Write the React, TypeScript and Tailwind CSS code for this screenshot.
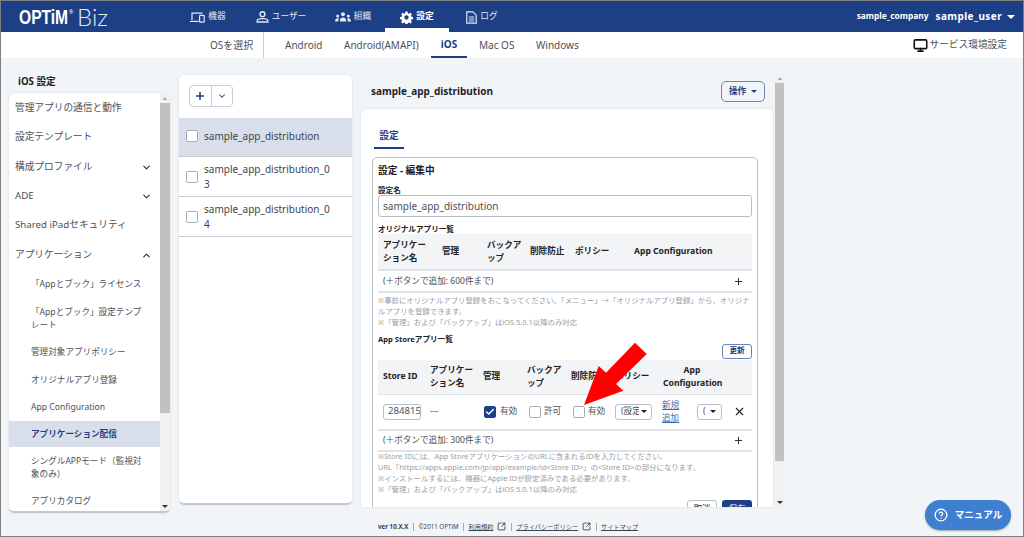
import React from "react";
import { Monitor, ChevronDown, ChevronUp, Plus, X, Check, CircleHelp, SquareArrowOutUpRight } from "lucide-react";

const Box = ({ on = false, className = "" }: { on?: boolean; className?: string }) => (
  <span className={`flex h-[12px] w-[12px] shrink-0 items-center justify-center rounded-[2px] border ${on ? "border-[#1d3f85] bg-[#1d3f85]" : "border-[#a9aeb5] bg-white"} ${className}`}>
    {on && <Check size={10} strokeWidth={3.5} className="text-white" />}
  </span>
);

const Caret = ({ className = "" }: { className?: string }) => (
  <span className={`inline-block h-0 w-0 border-x-[3px] border-t-[3px] border-x-transparent ${className}`} />
);

const Nav = ({ icon, label, active = false, w }: { icon: React.ReactNode; label: string; active?: boolean; w: string }) => (
  <div className={`flex h-[27px] items-center justify-center gap-[3px] pt-[5px] text-[8.7px] ${w} ${active ? "font-bold text-white" : "text-[#e4e9f2]"}`}>
    {icon}
    <span>{label}</span>
  </div>
);

const DeviceIcon = () => (
  <svg width="15" height="11" viewBox="0 0 15 11" fill="none" stroke="currentColor" strokeWidth="1.2">
    <path d="M2 8V1.2h10.5" />
    <path d="M0 9.4h8.6" />
    <rect x="9.6" y="3.4" width="4.6" height="6.8" rx="0.6" />
  </svg>
);
const UserIcon = () => (
  <svg width="13" height="12" viewBox="0 0 13 12" fill="none" stroke="currentColor" strokeWidth="1.4">
    <circle cx="6.5" cy="3.2" r="2.4" />
    <path d="M1.2 11h10.6V9.6c0-1-1.6-2-5.3-2s-5.3 1-5.3 2z" />
  </svg>
);
const GroupIcon = () => (
  <svg width="16" height="10" viewBox="0 0 16 10" fill="currentColor">
    <circle cx="8" cy="2.2" r="2" />
    <path d="M4.8 9.5c0-2.6 1.2-4 3.2-4s3.2 1.400 3.200 4z" />
    <circle cx="2.700" cy="4" r="1.500" />
    <path d="M0 9.500c0-2 1-3.300 2.700-3.300.6 0 1 .1 1.300.4-.5.800-.8 1.800-.8 2.900z" />
    <circle cx="13.300" cy="4" r="1.500" />
    <path d="M16 9.500c0-2-1-3.300-2.700-3.300-.6 0-1 .1-1.300.4.500.800.800 1.800.800 2.900z" />
  </svg>
);
const GearIcon = () => (
  <svg width="13" height="13" viewBox="0 0 24 24" fill="currentColor">
    <path fillRule="evenodd" d="M10 1h4l.6 3.100 2 .8L19.300 3l2.800 2.800-1.900 2.700.8 2 3 .5v4l-3.100.6-.8 2 1.900 2.700-2.800 2.800-2.700-1.900-2 .8-.5 3h-4l-.6-3.100-2-.8-2.700 1.900-2.800-2.800 1.900-2.700-.8-2-3-.5v-4l3.100-.6.8-2L1.900 5.800 4.700 3l2.700 1.900 2-.8zM12 8a4 4 0 1 0 0 8 4 4 0 0 0 0-8z" />
  </svg>
);
const DocIcon = () => (
  <svg width="11" height="13" viewBox="0 0 11 13" fill="none" stroke="currentColor" strokeWidth="1.2">
    <path d="M.8.8h6l3.400 3.400v8H.8z" />
    <path d="M2.800 6h5.400M2.800 8h5.400M2.800 10h5.400" />
  </svg>
);

const Side = ({ label, sub = false, active = false, chev, cls = "" }: { label: string; sub?: boolean; active?: boolean; chev?: "d" | "u"; cls?: string }) => (
  <div className={`flex items-center justify-between ${sub ? "pl-[22px] pr-[14px] text-[8.6px] leading-[13px]" : "pl-[6px] pr-[8px] text-[9.7px]"} ${active ? "bg-[#d8dfea] font-bold text-[#1d3f85]" : "text-[#4c5157]"} ${cls}`}>
    <span>{label}</span>
    {chev === "d" && <ChevronDown size={11} strokeWidth={2.5} className="text-[#2c3036]" />}
    {chev === "u" && <ChevronUp size={11} strokeWidth={2.5} className="text-[#2c3036]" />}
  </div>
);

const Bar = ({ cls, thumb }: { cls: string; thumb: string }) => (
  <div className={`flex shrink-0 flex-col items-center bg-[#f1f1f1] ${cls}`}>
    <div className="flex h-[10px] items-center"><span className="h-0 w-0 border-x-[2.5px] border-b-[3px] border-x-transparent border-b-[#a3a3a3]" /></div>
    <div className={`w-full bg-[#c1c1c1] ${thumb}`} />
    <div className="flex-1" />
    <div className="flex h-[10px] items-center"><Caret className="border-t-[#333]" /></div>
  </div>
);

const Row = ({ name, sel = false }: { name: string; sel?: boolean }) => (
  <div className={`flex items-center gap-[6px] border-b border-[#c7ccd3] pl-[7px] text-[10px] leading-[14.5px] text-[#3f444a] ${sel ? "h-[39px] bg-[#d8dfea] pb-[2px]" : "h-[40px]"}`}>
    <Box />
    <span className="w-[129px] break-all">{name}</span>
  </div>
);

const Add = ({ label, cls }: { label: string; cls: string }) => (
  <div className={`flex items-center justify-between border-y-2 border-[#dfe2e6] pl-[5px] pr-[8px] text-[8.6px] text-[#4c5157] ${cls}`}>
    <span>{label}</span>
    <Plus size={11} strokeWidth={2} className="text-[#222]" />
  </div>
);

const Th = ({ w, children, cls = "" }: { w: string; children: React.ReactNode; cls?: string }) => (
  <div className={`shrink-0 font-bold leading-[13px] ${w} ${cls}`}>{children}</div>
);

const Sep = () => <span className="h-[8px] w-px bg-[#a9aeb5]" />;

export default function App() {
  return (
    <div className="relative flex h-[537px] w-[1024px] flex-col overflow-hidden border border-[#7f7f7f] bg-[#f2f5f8] font-['Noto_Sans','Noto_Sans_CJK_JP',sans-serif]">
      {/* header */}
      <header className="flex h-[31px] shrink-0 items-end bg-[#1d3f85] text-white">
        <div className="flex h-[31px] w-[174px] shrink-0 items-center pl-[18px]">
          <span className="inline-block w-[50px] origin-left scale-x-[0.78] whitespace-nowrap font-['Liberation_Sans',sans-serif] text-[20px] font-bold leading-none">OPTiM</span>
          <span className="h-[14px] w-[8px] text-[5px] leading-none">®</span>
          <span className="font-['Lato',sans-serif] text-[24px] font-light leading-none text-[#e4e9f2]">Biz</span>
        </div>
        <nav className="flex h-[31px] items-start">
          <Nav w="w-[66px]" label="機器" icon={<DeviceIcon />} />
          <Nav w="w-[80px]" label="ユーザー" icon={<UserIcon />} />
          <Nav w="w-[64px]" label="組織" icon={<GroupIcon />} />
          <div className="flex h-[31px] w-[64px] flex-col items-center">
            <Nav w="w-full" active label="設定" icon={<GearIcon />} />
            <div className="h-[4px] w-full bg-white" />
          </div>
          <Nav w="w-[66px]" label="ログ" icon={<DocIcon />} />
        </nav>
        <div className="ml-auto flex h-[31px] items-center pr-[8px] font-bold">
          <span className="text-[8.4px]">sample_company</span>
          <span className="ml-[7px] text-[10px] tracking-[0.4px]">sample_user</span>
          <Caret className="ml-[5px] border-x-[4px] border-t-[4px] border-t-white" />
        </div>
      </header>

      {/* sub nav */}
      <div className="flex h-[26px] shrink-0 items-center bg-white pl-[209px] pr-[16px] text-[10px] text-[#4c5157]">
        <span className="w-[53px]">OSを選択</span>
        <span className="h-full w-[1px] bg-[#c9ccd0]" />
        <span className="ml-[21px] w-[59px]">Android</span>
        <span className="w-[87px]">Android(AMAPI)</span>
        <span className="flex h-full w-[36px] items-center justify-center border-b-2 border-[#1d3f85] font-bold text-[#1d3f85]">iOS</span>
        <span className="ml-[12px] w-[57px]">Mac OS</span>
        <span>Windows</span>
        <div className="ml-auto flex items-center gap-[2px]">
          <Monitor size={15} strokeWidth={2.5} className="text-[#111]" />
          <span className="text-[9.7px]">サービス環境設定</span>
        </div>
      </div>

      {/* main */}
      <main className="flex min-h-0 flex-1 items-start pl-[8px]">
        {/* left column */}
        <div className="mt-[15px] w-[161px] shrink-0">
          <div className="mb-[2px] pl-[9px] text-[9.7px] font-bold leading-[18px] text-[#1f2328]">iOS 設定</div>
          <div className="flex h-[420px] overflow-hidden rounded-[5px] border-b-2 border-[#c5c9cf] bg-white shadow-[0_0_2px_#cfd3d8]">
            <div className="flex-1 overflow-hidden">
              <Side label="管理アプリの通信と動作" cls="mt-[7px] h-[16px]" />
              <Side label="設定テンプレート" cls="mt-[13px] h-[16px]" />
              <Side label="構成プロファイル" chev="d" cls="mt-[14px] h-[16px]" />
              <Side label="ADE" chev="d" cls="mt-[13px] h-[16px]" />
              <Side label="Shared iPadセキュリティ" cls="mt-[13px] h-[16px]" />
              <Side label="アプリケーション" chev="u" cls="mt-[14px] h-[16px]" />
              <Side sub label="「Appとブック」ライセンス" cls="mt-[15px] h-[13px]" />
              <Side sub label="「Appとブック」設定テンプレート" cls="mt-[15px]" />
              <Side sub label="管理対象アプリポリシー" cls="mt-[14px] h-[13px]" />
              <Side sub label="オリジナルアプリ登録" cls="mt-[15px] h-[13px]" />
              <Side sub label="App Configuration" cls="mt-[14px] h-[13px]" />
              <Side sub active label="アプリケーション配信" cls="mt-[7px] h-[26px]" />
              <Side sub label="シングルAPPモード（監視対象のみ）" cls="mt-[8px]" />
              <Side sub label="アプリカタログ" cls="mt-[14px] h-[13px]" />
            </div>
            <Bar cls="w-[10px]" thumb="h-[310px]" />
          </div>
        </div>

        {/* middle card */}
        <div className="ml-[9px] mt-[17px] h-[430px] w-[173px] shrink-0 rounded-[5px] border-b-2 border-[#c5c9cf] bg-white shadow-[0_0_2px_#cfd3d8]">
          <div className="flex h-[43px] items-end pb-[11px] pl-[10px]">
            <div className="flex h-[22px] w-[44px] rounded-[4px] border border-[#c7ccd3]">
              <div className="flex flex-1 items-center justify-center border-r border-[#c7ccd3]"><Plus size={12} strokeWidth={3} className="text-[#1d3f85]" /></div>
              <div className="flex flex-1 items-center justify-center"><ChevronDown size={10} strokeWidth={2.5} className="text-[#1d3f85]" /></div>
            </div>
          </div>
          <Row sel name="sample_app_distribution" />
          <Row name="sample_app_distribution_03" />
          <Row name="sample_app_distribution_04" />
        </div>

        {/* right column */}
        <div className="ml-[9px] flex h-[449px] w-[412px] shrink-0 flex-col">
          <div className="flex h-[51px] shrink-0 items-center justify-between pl-[10px] pr-[8px] pt-[16px]">
            <span className="text-[10px] font-bold text-[#1f2328]">sample_app_distribution</span>
            <span className="flex h-[21px] w-[44px] items-center justify-center gap-[5px] rounded-[5px] border border-[#6b84b6] text-[8.6px] font-bold text-[#1d3f85]">操作<Caret className="border-t-[#1d3f85]" /></span>
          </div>
          <div className="flex-1 overflow-hidden rounded-t-[5px] bg-white pl-[11px] pr-[15px] shadow-[0_0_2px_#cfd3d8]">
            <div className="ml-[2px] mt-[14px] flex h-[26px] w-[30px] items-start justify-center border-b-2 border-[#1d3f85] pt-[6px] text-[9.7px] font-bold text-[#1d3f85]">設定</div>
            <div className="mt-[8px] h-[360px] rounded-[5px] border border-[#b9bec5] px-[5px]">
              <div className="pt-[6px] text-[9.7px] font-bold leading-[14px] text-[#222]">設定 - 編集中</div>
              <div className="mt-[7px] text-[7.6px] font-bold leading-[10px] text-[#222]">設定名</div>
              <div className="flex h-[22px] items-center rounded-[3px] border border-[#b9bec5] px-[4px] text-[10px] text-[#4c5157]">sample_app_distribution</div>
              <div className="mt-[7px] text-[7.6px] font-bold leading-[10px] text-[#222]">オリジナルアプリ一覧</div>

              <div className="flex h-[35px] items-center bg-[#f2f4f6] pl-[5px] text-[8.6px] text-[#222]">
                <Th w="w-[59px] pr-[10px]">アプリケーション名</Th>
                <Th w="w-[45px]">管理</Th>
                <Th w="w-[43px] pr-[5px]">バックアップ</Th>
                <Th w="w-[45px]">削除防止</Th>
                <Th w="w-[59px]">ポリシー</Th>
                <Th w="w-[110px]">App Configuration</Th>
              </div>
              <Add label="(＋ボタンで追加: 600件まで)" cls="h-[24px]" />
              <div className="mt-[2px] text-[7.4px] leading-[11.2px] text-[#9a9ea4]">
                <p>※事前にオリジナルアプリ登録をおこなってください。「メニュー」→「オリジナルアプリ登録」から、オリジナルアプリを登録できます。</p>
                <p>※「管理」および「バックアップ」はiOS 5.0.1以降のみ対応</p>
              </div>
              <div className="mt-[5px] text-[7.6px] font-bold leading-[10px] text-[#222]">App Storeアプリ一覧</div>
              <div className="flex h-[16px] items-start justify-end">
                <span className="flex h-[15px] w-[30px] items-center justify-center rounded-[3px] border border-[#6b84b6] text-[7.6px] font-bold text-[#1d3f85]">更新</span>
              </div>
              <div className="flex h-[35px] items-center border-b border-[#dfe2e6] bg-[#f2f4f6] pl-[5px] text-[8.6px] text-[#222]">
                <Th w="w-[47px]">Store ID</Th>
                <Th w="w-[53px] pr-[8px]">アプリケーション名</Th>
                <Th w="w-[44px]">管理</Th>
                <Th w="w-[44px] pr-[5px]">バックアップ</Th>
                <Th w="w-[44px]">削除防止</Th>
                <Th w="w-[48px]">ポリシー</Th>
                <Th w="w-[58px]" cls="text-center">App Configuration</Th>
              </div>
              <div className="flex h-[34px] items-center pl-[5px] text-[8.6px] text-[#4c5157]">
                <span className="flex h-[16px] w-[38px] shrink-0 items-center overflow-hidden whitespace-nowrap rounded-[3px] border border-[#b9bec5] pl-[4px] text-[9.6px]">28481599</span>
                <span className="ml-[9px] w-[54px] shrink-0">---</span>
                <span className="flex w-[45px] shrink-0 items-center gap-[4px]"><Box on />有効</span>
                <span className="flex w-[44px] shrink-0 items-center gap-[3px]"><Box />許可</span>
                <span className="flex w-[42px] shrink-0 items-center gap-[3px]"><Box />有効</span>
                <span className="flex h-[16px] w-[37px] shrink-0 items-center justify-between overflow-hidden whitespace-nowrap rounded-[3px] border border-[#b9bec5] pl-[5px] pr-[4px]"><span className="w-[18px] overflow-hidden">(設定</span><Caret className="border-t-[#222]" /></span>
                <span className="ml-[10px] w-[18px] shrink-0 leading-[13px] text-[#3f6aa8] underline">新規追加</span>
                <span className="ml-[17px] flex h-[16px] w-[25px] shrink-0 items-center justify-between rounded-[3px] border border-[#b9bec5] px-[5px]">(<Caret className="border-t-[#222]" /></span>
                <X size={13} strokeWidth={2} className="ml-[11px] text-[#222]" />
              </div>
              <Add label="(＋ボタンで追加: 300件まで)" cls="h-[23px]" />
              <div className="-mt-px text-[7.4px] leading-[11.1px] text-[#9a9ea4]">
                <p>※Store IDには、App StoreアプリケーションのURLに含まれるIDを入力してください。</p>
                <p>URL「https://apps.apple.com/jp/app/example/id&lt;Store ID&gt;」の&lt;Store ID&gt;の部分になります。</p>
                <p>※インストールするには、機器にApple IDが設定済みである必要があります。</p>
                <p>※「管理」および「バックアップ」はiOS 5.0.1以降のみ対応</p>
              </div>
              <div className="mt-[5px] flex justify-end gap-[5px]">
                <span className="flex h-[18px] w-[30px] items-center justify-center rounded-[3px] border border-[#b9bec5] text-[8.6px] text-[#222]">取消</span>
                <span className="flex h-[18px] w-[30px] items-center justify-center rounded-[3px] bg-[#1d3f85] text-[8.6px] text-white">保存</span>
              </div>
            </div>
          </div>
        </div>

        <Bar cls="ml-[2px] mt-[15px] h-[434px] w-[9px]" thumb="h-[378px]" />
      </main>

      {/* footer */}
      <footer className="flex h-[29px] shrink-0 items-center gap-[4.5px] pl-[377px] pt-[11px] text-[6.2px] text-[#3f444a]">
        <span className="font-bold">ver 10.X.X</span>
        <Sep />
        <span>©2011 OPTiM</span>
        <Sep />
        <span className="flex items-center gap-[4px]"><span className="underline">利用規約</span><SquareArrowOutUpRight size={9} strokeWidth={2} className="text-[#222]" /></span>
        <Sep />
        <span className="flex items-center gap-[4px]"><span className="underline">プライバシーポリシー</span><SquareArrowOutUpRight size={9} strokeWidth={2} className="text-[#222]" /></span>
        <Sep />
        <span className="underline">サイトマップ</span>
      </footer>

      {/* overlays */}
      <div className="absolute left-[924px] top-[499px] flex h-[30px] w-[86px] items-center justify-center gap-[7px] rounded-full bg-[#3f7fd0] text-[9.6px] font-bold text-white shadow-[0_1px_2px_#9aa]">
        <CircleHelp size={14} strokeWidth={2.2} />
        <span>マニュアル</span>
      </div>
      <svg className="absolute left-[-1px] top-[-1px]" width="1024" height="537" viewBox="0 0 1024 537" style={{ pointerEvents: "none" }}>
        <polygon fill="#ff0000" points="635,342.7 646.7,354 616,384 623.3,390.7 584,405 598.7,366 606,372.7" />
      </svg>
    </div>
  );
}
